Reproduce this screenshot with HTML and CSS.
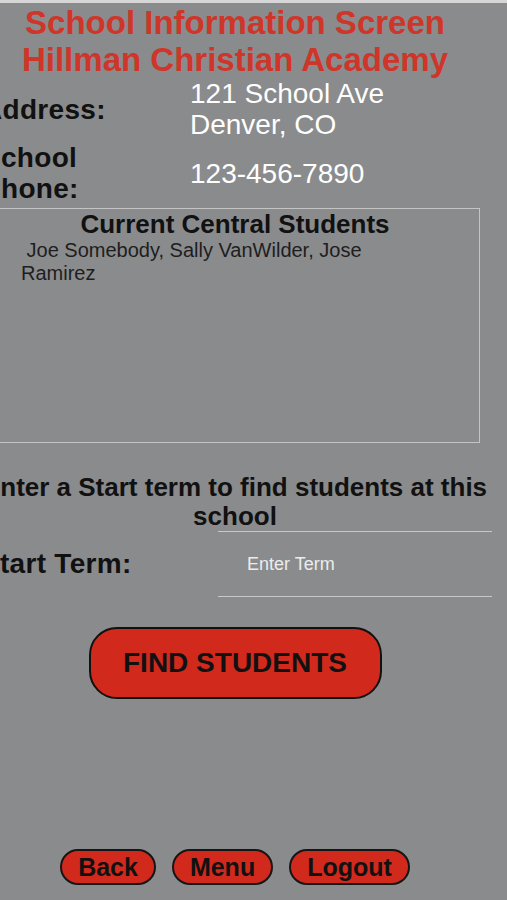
FILE: index.html
```html
<!DOCTYPE html>
<html lang="en">
  <head>
    <meta charset="UTF-8" />
    <meta name="viewport" content="width=device-width, initial-scale=1.0" />
    <title>School Information</title>
    <link rel="stylesheet" href="styles.css">
  </head>
  <body>
    <div class="status"></div>
    <main class="screen">
      <h1 class="title">School Information Screen<br />Hillman Christian Academy</h1>
      <div class="info-row">
        <div class="label">Address:</div>
        <div class="value">121 School Ave<br />Denver, CO</div>
      </div>
      <div class="info-row">
        <div class="label">School<br />Phone:</div>
        <div class="value">123-456-7890</div>
      </div>
      <div class="students">
        <h2>Current Central Students</h2>
        <p>&nbsp;Joe Somebody, Sally VanWilder, Jose Ramirez</p>
      </div>
      <p class="prompt">Enter a Start term to find students at this school</p>
      <div class="term-row">
        <label for="term">Start Term:</label>
        <input type="text" id="term" placeholder="Enter Term" />
      </div>
      <div class="find">
        <button class="find-btn">FIND STUDENTS</button>
      </div>
      <nav class="nav">
        <button>Back</button>
        <button>Menu</button>
        <button>Logout</button>
      </nav>
    </main>
  </body>
</html>
```

FILE: styles.css
```css
html,
body {
  margin: 0;
  height: 100%;
}
body {
  background-color: #8a8b8d;
  font-family: "Liberation Sans", Arial, sans-serif;
  overflow: hidden;
  color: #111;
}
.status {
  height: 3px;
  background-color: #d6d6d6;
}
.screen {
  width: 502px;
  margin-left: -16px;
  height: calc(100vh - 3px);
  display: flex;
  flex-direction: column;
}
.title {
  margin: 1px 0 0;
  text-align: center;
  color: #cf3529;
  font-size: 33px;
  line-height: 37px;
  font-weight: bold;
}
.info-row {
  display: grid;
  grid-template-columns: 206px 1fr;
  align-items: center;
  margin-bottom: 2px;
}
.label {
  margin-left: -2px;
  font-size: 28px;
  line-height: 31px;
  font-weight: bold;
  letter-spacing: 0.3px;
}
.value {
  color: #fff;
  font-size: 28px;
  line-height: 31px;
}
.students {
  margin: 2px 6px 0;
  height: 232px;
  border: 1px solid #c4c4c4;
  padding: 1px 0 0 30px;
}
.students h2 {
  margin: 0;
  padding-right: 30px;
  text-align: center;
  font-size: 26px;
  line-height: 28px;
}
.students p {
  margin: 1px 0 0;
  width: 380px;
  color: #1e1e1e;
  font-size: 20px;
  line-height: 23px;
}
.prompt {
  margin: 30px -6px 0;
  text-align: center;
  font-size: 26px;
  line-height: 29px;
  font-weight: bold;
}
.term-row {
  display: grid;
  grid-template-columns: 234px 274px;
  align-items: center;
}
.term-row label {
  margin-left: -3px;
  font-size: 28px;
  font-weight: bold;
  letter-spacing: 0.3px;
}
.term-row input {
  height: 64px;
  box-sizing: content-box;
  padding: 0 0 0 29px;
  border: none;
  border-top: 1px solid #c8c8c8;
  border-bottom: 1px solid #c8c8c8;
  background: transparent;
  color: #fff;
  font-family: "Liberation Sans", Arial, sans-serif;
  font-size: 18px;
  outline: none;
}
.term-row input::placeholder {
  color: #ececec;
}
.find {
  margin-top: 30px;
  text-align: center;
}
.find-btn {
  width: 293px;
  height: 72px;
  border: 2.5px solid #111;
  border-radius: 28px;
  background-color: #d2291d;
  color: #111;
  font-family: "Liberation Sans", Arial, sans-serif;
  font-size: 28px;
  font-weight: bold;
}
.nav {
  margin-top: auto;
  margin-bottom: 15px;
  display: flex;
  justify-content: center;
  gap: 16px;
}
.nav button {
  height: 36px;
  padding: 0 16px;
  border: 2.5px solid #151515;
  border-radius: 18px;
  background-color: #d2291d;
  color: #111;
  font-family: "Liberation Sans", Arial, sans-serif;
  font-size: 25px;
  font-weight: bold;
  line-height: 1;
}
```
